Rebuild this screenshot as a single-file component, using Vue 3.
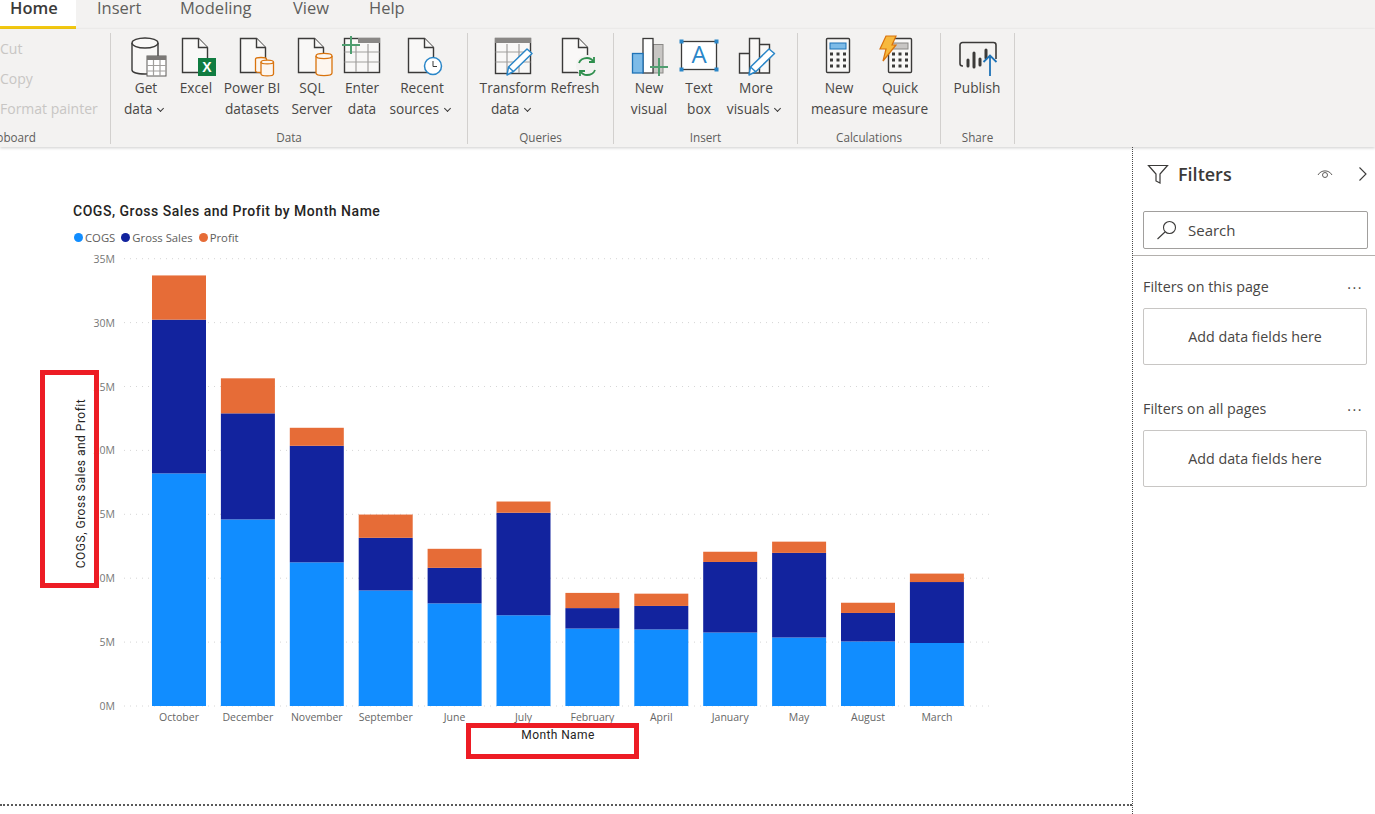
<template>
  <div class="app">
    <nav class="tabs">
      <span v-for="t in tabs" :key="t.name" :class="['tab', { active: t.name === 'Home' }]" :style="{ width: t.w + 'px' }">{{ t.name }}</span>
    </nav>

    <div class="ribbon">
      <section class="group clip">
        <div class="clip-rows">
          <span>Cut</span>
          <span>Copy</span>
          <span>Format painter</span>
        </div>
        <div class="group-label clip-label">Clipboard</div>
      </section>

      <section class="group data">
        <div class="btns">
          <button class="rb" style="width:50px">
            <svg width="48" height="42" viewBox="0 0 48 42">
              <path class="ln" d="M10 7v27c0 2.500 6 4 13 4 1 0 2 0 3-.1V21h10V7" />
              <ellipse class="ln" cx="23" cy="7" rx="13" ry="5" />
              <rect x="25" y="20" width="19" height="20" fill="#fff" stroke="#5c5a58" />
              <rect x="25" y="20" width="19" height="4" fill="#7a7876" />
              <path class="thin" d="M31.500 24v16M38 24v16M25 29.500h19M25 35h19" />
            </svg>
            <span>Get</span><span>data <i class="chev"></i></span>
          </button>
          <button class="rb" style="width:50px">
            <svg width="48" height="42" viewBox="0 0 48 42">
              <path class="ln" d="M10.500 2.500h16l9 9v25h-25z" />
              <path class="ln" d="M26.500 2.500v9h9" />
              <rect x="26" y="22" width="18" height="18" fill="#107c41" />
              <text x="35" y="36" class="xl">X</text>
            </svg>
            <span>Excel</span>
          </button>
          <button class="rb" style="width:62px">
            <svg width="48" height="42" viewBox="0 0 48 42">
              <path class="ln" d="M12.500 2.500h16l9 9v25h-25z" />
              <path class="ln" d="M28.500 2.500v9h9" />
              <path class="or" d="M27.500 23c0-2 11-2 11 0v12c0 2-11 2-11 0z" />
              <path class="or" d="M33 26c0-2.500 12.500-2.500 12.500 0v12c0 2.500-12.500 2.500-12.500 0z" />
              <path class="or" d="M33 26c0 2.500 12.500 2.500 12.500 0" />
            </svg>
            <span>Power BI</span><span>datasets</span>
          </button>
          <button class="rb" style="width:58px">
            <svg width="48" height="42" viewBox="0 0 48 42">
              <path class="ln" d="M10.500 2.500h16l9 9v25h-25z" />
              <path class="ln" d="M26.500 2.500v9h9" />
              <path class="or" d="M28 20c0-3.500 16-3.500 16 0v17c0 3.500-16 3.500-16 0z" />
              <path class="or" d="M28 20c0 3.500 16 3.500 16 0" />
            </svg>
            <span>SQL</span><span>Server</span>
          </button>
          <button class="rb" style="width:42px">
            <svg width="48" height="42" viewBox="0 0 48 42">
              <rect class="ln" x="6.500" y="2.500" width="35" height="34" />
              <rect x="20" y="2" width="22" height="5" fill="#8a8886" />
              <path class="thin" d="M6.500 16h35M6.500 26h35M18 8v28M30 8v28" />
              <path class="plus" d="M4 9h18M13 0v18" />
            </svg>
            <span>Enter</span><span>data</span>
          </button>
          <button class="rb" style="width:78px">
            <svg width="48" height="42" viewBox="0 0 48 42">
              <path class="ln" d="M10.500 2.500h16l9 9v25h-25z" />
              <path class="ln" d="M26.500 2.500v9h9" />
              <circle cx="35" cy="30" r="8.500" fill="#fff" stroke="#2a86c8" stroke-width="1.500" />
              <path d="M35 25v5.500h4" fill="none" stroke="#3b3a39" />
            </svg>
            <span>Recent</span><span>sources <i class="chev"></i></span>
          </button>
        </div>
        <div class="group-label">Data</div>
      </section>

      <section class="group queries">
        <div class="btns">
          <button class="rb" style="width:70px">
            <svg width="48" height="42" viewBox="0 0 48 42">
              <rect class="ln" x="6.500" y="2.500" width="35" height="35" />
              <rect x="6" y="2" width="36" height="5" fill="#8a8886" />
              <path class="thin" d="M6.500 16h35M6.500 26h35M18 8v29M30 8v29" />
              <path class="pen" d="M18 39l1.500-8L38 13l5 4.500-18.500 18z" />
              <path class="pen" d="M19.500 31l5 4.500" />
            </svg>
            <span>Transform</span><span>data <i class="chev"></i></span>
          </button>
          <button class="rb" style="width:54px">
            <svg width="48" height="42" viewBox="0 0 48 42">
              <path class="ln" d="M11.500 2.500h16l9 9v25h-25z" />
              <path class="ln" d="M27.500 2.500v9h9" />
              <circle cx="36" cy="30" r="11" fill="#f3f2f1" />
              <path class="ref" d="M28 27c1-3 4.500-5 8-5 3 0 5 1.300 6.500 3.500M44 34c-1 3-4.500 5-8 5-3 0-5-1.300-6.500-3.500" />
              <path class="ref" d="M43 21v5h-5M29 40v-5h5" />
            </svg>
            <span>Refresh</span>
          </button>
        </div>
        <div class="group-label">Queries</div>
      </section>

      <section class="group insert">
        <div class="btns">
          <button class="rb" style="width:44px">
            <svg width="48" height="42" viewBox="0 0 48 42">
              <rect x="28" y="8.500" width="10" height="28.500" fill="#c8c6c4" stroke="#8a8886" />
              <rect x="18" y="2.500" width="10" height="34.500" fill="#fff" stroke="#3b3a39" stroke-width="1.300" />
              <rect x="7.500" y="17.500" width="10.500" height="19.500" fill="#7dbbe8" stroke="#1f73b7" stroke-width="1.300" />
              <path class="plus" d="M25 31h18M34 22v18" />
            </svg>
            <span>New</span><span>visual</span>
          </button>
          <button class="rb" style="width:56px">
            <svg width="48" height="42" viewBox="0 0 48 42">
              <rect x="6.500" y="5.500" width="35" height="28" fill="#fff" stroke="#3b3a39" stroke-width="1.300" />
              <rect x="4.500" y="3.500" width="4" height="4" fill="#2a86c8" />
              <rect x="39.500" y="3.500" width="4" height="4" fill="#2a86c8" />
              <rect x="4.500" y="31.500" width="4" height="4" fill="#2a86c8" />
              <rect x="39.500" y="31.500" width="4" height="4" fill="#2a86c8" />
              <text x="24" y="27" class="a">A</text>
            </svg>
            <span>Text</span><span>box</span>
          </button>
          <button class="rb" style="width:58px">
            <svg width="48" height="42" viewBox="0 0 48 42">
              <path class="ln" d="M7.500 37V17.500h10V37zM17.500 17.500V2.500h10V37M27.500 8.500h10V37H7.500" />
              <path class="pen" d="M17 39l1.500-8L37 13l5.500 4.500-18.500 18z" />
              <path class="pen" d="M18.500 31l5 4.500" />
            </svg>
            <span>More</span><span>visuals <i class="chev"></i></span>
          </button>
        </div>
        <div class="group-label">Insert</div>
      </section>

      <section class="group calc">
        <div class="btns">
          <button class="rb" style="width:62px">
            <svg width="48" height="42" viewBox="0 0 48 42">
              <rect class="ln" x="11.500" y="2.500" width="23" height="34" rx="1" />
              <rect x="15" y="7" width="16" height="6" fill="#7dbbe8" stroke="#1f73b7" />
              <path class="keys" d="M15 18h3M21.500 18h3M28 18h3M15 24h3M21.500 24h3M28 24h3M15 30h3M21.500 30h3M28 30h3" />
            </svg>
            <span>New</span><span>measure</span>
          </button>
          <button class="rb" style="width:60px">
            <svg width="48" height="42" viewBox="0 0 48 42">
              <rect class="ln" x="12.500" y="2.500" width="23" height="34" rx="1" />
              <rect x="16" y="7" width="16" height="6" fill="#c8c6c4" stroke="#8a8886" />
              <path class="keys" d="M16 18h3M22.500 18h3M29 18h3M16 24h3M22.500 24h3M29 24h3M16 30h3M22.500 30h3M29 30h3" />
              <path d="M10 0h10l-4 9h4L7 25l3-12H4z" fill="#f7b93e" stroke="#d9730d" stroke-width="1.200" />
            </svg>
            <span>Quick</span><span>measure</span>
          </button>
        </div>
        <div class="group-label">Calculations</div>
      </section>

      <section class="group share">
        <div class="btns">
          <button class="rb" style="width:52px">
            <svg width="48" height="42" viewBox="0 0 48 42">
              <path d="M10 30H9.500a2.500 2.500 0 0 1-2.500-2.500V9a2.500 2.500 0 0 1 2.500-2.500h31A2.500 2.500 0 0 1 43 9v14" fill="none" stroke="#3b3a39" stroke-width="1.600" />
              <path d="M15 24v6M21 17v14M27 23v6M33 14v8" fill="none" stroke="#3b3a39" stroke-width="3" stroke-linecap="round" />
              <path d="M37 40V20M30.500 26l6.500-6.500 6.500 6.500" fill="none" stroke="#1f73b7" stroke-width="1.800" />
            </svg>
            <span>Publish</span>
          </button>
        </div>
        <div class="group-label">Share</div>
      </section>
    </div>

    <div class="body">
      <main class="canvas-wrap">
        <div class="canvas">
          <h2 class="chart-title">COGS, Gross Sales and Profit by Month Name</h2>
          <div class="legend">
            <span v-for="s in series" :key="s.name" class="legend-item">
              <i class="dot" :style="{ background: s.color }"></i>{{ s.name }}
            </span>
          </div>
          <svg class="plot" width="1131" height="500" viewBox="0 250 1131 500">
            <g v-for="n in 8" :key="n">
              <line class="grid" x1="124" x2="993" :y1="yAt((n - 1) * 5)" :y2="yAt((n - 1) * 5)" />
              <text class="tick" x="115" :y="yAt((n - 1) * 5) + 4">{{ (n - 1) * 5 }}M</text>
            </g>
            <g v-for="(b, i) in bars" :key="b.month">
              <rect v-for="r in b.rects" :key="r.color" :x="152 + i * 68.9" :y="r.y" width="54" :height="r.h" :fill="r.color" />
              <text class="month" :x="179 + i * 68.9" y="721">{{ b.month }}</text>
            </g>
            <text class="axis" x="558" y="739">Month Name</text>
            <text class="axis y-title" transform="translate(85 483.500) rotate(-90)">COGS, Gross Sales and Profit</text>
          </svg>
        </div>
        <div class="mark mark-y"></div>
        <div class="mark mark-x"></div>
      </main>

      <aside class="filters">
        <header class="f-head">
          <svg width="22" height="20" viewBox="0 0 22 20">
            <path d="M1.500 1.500h19l-7.500 8.500v9l-4-2v-7z" fill="none" stroke="#3b3a39" stroke-width="1.200" />
          </svg>
          <span class="f-title">Filters</span>
          <svg class="eye" width="16" height="10" viewBox="0 0 16 10">
            <path d="M1 6c3-5.500 11-5.500 14 0" fill="none" stroke="#605e5c" />
            <circle cx="8" cy="6" r="2.500" fill="none" stroke="#605e5c" />
          </svg>
          <svg class="chevron" width="10" height="16" viewBox="0 0 10 16">
            <path d="M1.500 1.500L8 8l-6.500 6.500" fill="none" stroke="#3b3a39" stroke-width="1.100" />
          </svg>
        </header>
        <div class="search">
          <svg width="22" height="20" viewBox="0 0 22 20">
            <circle cx="13.500" cy="7.500" r="6" fill="none" stroke="#3b3a39" stroke-width="1.100" />
            <path d="M9 12l-7.500 7" fill="none" stroke="#3b3a39" stroke-width="1.100" />
          </svg>
          <span>Search</span>
        </div>
        <div class="f-rule"></div>
        <section v-for="f in filterSections" :key="f" class="f-section">
          <div class="f-row"><span>{{ f }}</span><span class="dots">...</span></div>
          <div class="drop">Add data fields here</div>
        </section>
      </aside>
    </div>
  </div>
</template>

<script setup>
import { computed } from 'vue';

const tabs = [
  { name: 'Home', w: 76 },
  { name: 'Insert', w: 83 },
  { name: 'Modeling', w: 113 },
  { name: 'View', w: 76 },
  { name: 'Help', w: 60 },
];

const series = [
  { name: 'COGS', color: '#118dff' },
  { name: 'Gross Sales', color: '#12239e' },
  { name: 'Profit', color: '#e66c37' },
];

const filterSections = ['Filters on this page', 'Filters on all pages'];

// cogs, gross sales, profit in millions
const months = [
  ['October', 18.2, 12.03, 3.46],
  ['December', 14.6, 8.3, 2.74],
  ['November', 11.24, 9.12, 1.41],
  ['September', 9.04, 4.12, 1.82],
  ['June', 8.03, 2.78, 1.49],
  ['July', 7.1, 8.02, 0.88],
  ['February', 6.06, 1.6, 1.19],
  ['April', 5.99, 1.84, 0.96],
  ['January', 5.75, 5.52, 0.8],
  ['May', 5.36, 6.62, 0.88],
  ['August', 5.05, 2.23, 0.8],
  ['March', 4.93, 4.77, 0.66],
];

const yAt = (v) => 706 - v * 12.78;

const bars = computed(() =>
  months.map(([month, ...vals]) => {
    let total = 0;
    const rects = vals.map((v, i) => {
      total += v;
      return { color: series[i].color, y: yAt(total), h: v * 12.78 };
    });
    return { month, rects };
  })
);
</script>

<style scoped>
.app {
  width: 1375px;
  height: 814px;
  overflow: hidden;
  background: #fff;
  font-family: "Open Sans", "Noto Sans", sans-serif;
  color: #3b3a39;
}
.tabs {
  display: flex;
  height: 29px;
  background: #f3f2f1;
}
.tab {
  box-sizing: border-box;
  height: 29px;
  padding-left: 21px;
  font-size: 16.5px;
  line-height: 16px;
  color: #605e5c;
}
.tab.active {
  padding-left: 10px;
  background: #fff;
  border-bottom: 3px solid #f2c811;
  font-weight: 600;
  color: #3b3a39;
}
.ribbon {
  display: flex;
  box-sizing: border-box;
  height: 118px;
  padding: 4px 0 3px;
  background: #f3f2f1;
  box-shadow: 0 1px 3px rgba(0, 0, 0, 0.2);
  position: relative;
}
.group {
  display: flex;
  flex-direction: column;
  box-sizing: border-box;
  height: 111px;
  padding-top: 3px;
  border-right: 1px solid #d2d0ce;
}
.btns {
  display: flex;
  flex: 1;
  padding-left: 10px;
}
.clip { width: 111px; overflow: hidden; }
.data { width: 357px; }
.queries { width: 146px; }
.insert { width: 184px; }
.insert .btns { padding-left: 13px; }
.calc { width: 143px; }
.share { width: 74px; }
.clip-rows {
  display: flex;
  flex: 1;
  flex-direction: column;
  padding-top: 2px;
  gap: 9px;
  font-size: 14px;
  line-height: 21px;
  color: #c8c6c4;
  white-space: nowrap;
}
.group-label {
  height: 14px;
  font-size: 11.700px;
  line-height: 14px;
  text-align: center;
  color: #605e5c;
}
.clip-label {
  margin-left: -17px;
  text-align: left;
}
.rb {
  display: flex;
  flex-direction: column;
  align-items: center;
  height: 84px;
  padding: 0;
  border: 0;
  background: none;
  font: inherit;
  font-size: 13.700px;
  line-height: 20.500px;
  color: #484644;
  white-space: nowrap;
}
.rb svg {
  flex: none;
  margin-bottom: 0.400px;
  overflow: visible;
}
.chev {
  display: inline-block;
  width: 4px;
  height: 4px;
  margin: 0 5px 3px 2px;
  border-right: 1.300px solid #3b3a39;
  border-bottom: 1.300px solid #3b3a39;
  transform: rotate(45deg);
}
.ln { fill: #f9f8f7; stroke: #3b3a39; stroke-width: 1.400; }
.thin { fill: none; stroke: #a19f9d; stroke-width: 1.200; }
.or { fill: #fdf6ef; stroke: #d9730d; stroke-width: 1.300; }
.plus { fill: none; stroke: #4f9e70; stroke-width: 2; }
.pen { fill: #fff; stroke: #2a86c8; stroke-width: 1.500; stroke-linejoin: round; }
.ref { fill: none; stroke: #2f8f4e; stroke-width: 1.800; }
.keys { fill: none; stroke: #3b3a39; stroke-width: 3; }
.xl {
  font-family: "Liberation Sans", sans-serif;
  font-size: 14px;
  font-weight: 700;
  text-anchor: middle;
  fill: #fff;
}
.a {
  font-family: "Open Sans", sans-serif;
  font-size: 24px;
  text-anchor: middle;
  fill: #2a86c8;
}

.body {
  display: flex;
  height: 667px;
}
.canvas-wrap {
  position: relative;
  box-sizing: border-box;
  width: 1133px;
  border-right: 1px dotted #4a4a4a;
}
.canvas {
  box-sizing: border-box;
  height: 659px;
  padding-top: 55px;
  border-bottom: 2px dotted #5a5a5a;
}
.chart-title {
  margin: 0 0 0 73px;
  font-family: Roboto, sans-serif;
  font-size: 14px;
  font-weight: 500;
  line-height: 18px;
  letter-spacing: 0.52px;
  color: #252423;
}
.legend {
  display: flex;
  gap: 6px;
  height: 30px;
  margin-left: 74px;
  padding-top: 5px;
  box-sizing: border-box;
  font-size: 11.300px;
  line-height: 16px;
  color: #605e5c;
}
.legend-item {
  display: flex;
  align-items: center;
  gap: 2px;
}
.dot {
  width: 9px;
  height: 9px;
  border-radius: 50%;
}
.plot {
  display: block;
}
.grid {
  stroke: #d6d6d6;
  stroke-dasharray: 1 5;
}
.tick {
  font-size: 10.500px;
  text-anchor: end;
  fill: #777;
}
.month {
  font-size: 10.500px;
  text-anchor: middle;
  fill: #666;
}
.axis {
  font-family: Roboto, sans-serif;
  font-size: 12px;
  letter-spacing: 0.4px;
  text-anchor: middle;
  fill: #252423;
}
.y-title {
  letter-spacing: 0.5px;
}
.mark {
  position: absolute;
  box-sizing: border-box;
  border: 5px solid #ed1c24;
}
.mark-y {
  left: 40px;
  top: 223px;
  width: 59px;
  height: 218px;
}
.mark-x {
  left: 466px;
  top: 576px;
  width: 173px;
  height: 36px;
}

.filters {
  flex: 1;
  min-width: 0;
}
.f-head {
  display: flex;
  align-items: center;
  height: 28px;
  margin-top: 13px;
  padding-left: 14px;
}
.f-title {
  margin-left: 9px;
  font-size: 18px;
  font-weight: 600;
  color: #3b3a39;
}
.eye { margin-left: auto; }
.chevron { margin: 0 7px 0 25px; }
.search {
  display: flex;
  align-items: center;
  gap: 10px;
  box-sizing: border-box;
  width: 225px;
  height: 38px;
  margin: 23px 0 0 10px;
  padding-left: 12px;
  border: 1px solid #a19f9d;
  border-radius: 2px;
  font-size: 15px;
  color: #484644;
}
.f-rule {
  height: 1px;
  margin-top: 6px;
  background: #b3b0ad;
}
.f-section {
  margin: 20px 8px 0 10px;
}
.f-section + .f-section {
  margin-top: 33px;
}
.f-row {
  display: flex;
  justify-content: space-between;
  height: 22px;
  padding-right: 4px;
  font-size: 14.300px;
  line-height: 22px;
  color: #484644;
}
.dots {
  letter-spacing: 1.500px;
  line-height: 16px;
}
.drop {
  box-sizing: border-box;
  height: 57px;
  margin-top: 10px;
  border: 1px solid #c8c6c4;
  border-radius: 2px;
  font-size: 14.300px;
  line-height: 55px;
  text-align: center;
  color: #484644;
}
</style>

<style>
body {
  margin: 0;
  overflow: hidden;
}
</style>
